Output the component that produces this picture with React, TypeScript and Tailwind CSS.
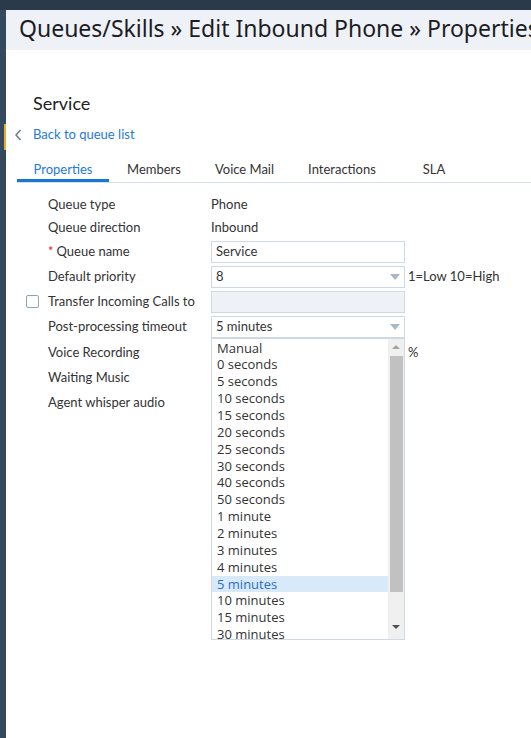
import React from 'react';

const tabs = [
  { label: 'Properties', w: 'w-[92px]', active: true },
  { label: 'Members', w: 'w-[90px]' },
  { label: 'Voice Mail', w: 'w-[91px]' },
  { label: 'Interactions', w: 'w-[104px]' },
  { label: 'SLA', w: 'w-[80px]' },
];

const options = [
  'Manual', '0 seconds', '5 seconds', '10 seconds', '15 seconds', '20 seconds', '25 seconds',
  '30 seconds', '40 seconds', '50 seconds', '1 minute', '2 minutes', '3 minutes', '4 minutes',
  '5 minutes', '10 minutes', '15 minutes', '30 minutes',
];

function Caret() {
  return (
    <svg width="10" height="6" viewBox="0 0 10 6" className="text-[#a9b8c9]">
      <path d="M0 0h10L5 6z" fill="currentColor" />
    </svg>
  );
}

function Label({ children }: { children: React.ReactNode }) {
  return <div className="w-[205px] pl-[42px] shrink-0">{children}</div>;
}

export default function App() {
  return (
    <div className="w-[531px] h-[738px] overflow-hidden bg-[#2b3a4a] pt-[10px] font-['Lato',sans-serif] text-[#333]">
      <div className="flex h-[728px]">
        <div className="w-[6px] bg-[#34495e] shrink-0 relative">
          <div className="absolute left-[4px] top-[114px] w-[2px] h-[26px] bg-[#f5a623]" />
        </div>
        <div className="flex-1 bg-white min-w-0">
          <div className="h-[40px] bg-[#eef2f7] pl-[13px] pb-[3px] flex items-center whitespace-nowrap overflow-hidden font-['Noto_Sans',sans-serif] text-[23px] text-[#1c1c24]">
            Queues/Skills » Edit Inbound Phone » Properties
          </div>
          <div className="pl-[27px] pt-[41px] text-[18px] leading-[24px] text-[#222]">Service</div>
          <div className="flex items-center h-[20px] mt-[10px] pl-[8px] text-[13px] text-[#1f7ad8]">
            <svg width="8" height="12" viewBox="0 0 8 12" className="mr-[11px]">
              <path d="M6.5 1L2 6l4.5 5" stroke="#6b7580" strokeWidth="1.4" fill="none" />
            </svg>
            Back to queue list
          </div>
          <div className="ml-[11px] mt-[12px] flex border-b border-[#d3deea] text-[13px]">
            {tabs.map((t) => (
              <div
                key={t.label}
                className={`${t.w} text-center h-[25px] flex items-center justify-center ${
                  t.active ? 'text-[#1f7ad8] border-b-[3px] border-[#1976d2] -mb-px pt-[3px]' : 'text-[#333] pt-[1px]'
                }`}
              >
                {t.label}
              </div>
            ))}
          </div>

          <div className="mt-[10px] text-[13px]">
            <div className="flex items-center h-[23px]">
              <Label>Queue type</Label>
              <div>Phone</div>
            </div>
            <div className="flex items-center h-[23px]">
              <Label>Queue direction</Label>
              <div>Inbound</div>
            </div>
            <div className="flex items-center h-[25px] pt-[1px]">
              <Label>
                <span className="text-[#e02424] mr-[3px]">*</span>Queue name
              </Label>
              <div className="w-[194px] h-[22px] border border-[#cfd9e4] px-[4px] flex items-center">Service</div>
            </div>
            <div className="flex items-center h-[25px]">
              <Label>Default priority</Label>
              <div className="flex items-center">
                <div className="w-[194px] h-[22px] border border-[#cfd9e4] px-[4px] flex items-center justify-between">
                  <span>8</span>
                  <Caret />
                </div>
                <span className="ml-[3px]">1=Low 10=High</span>
              </div>
            </div>
            <div className="flex items-center h-[25px] relative">
              <div className="absolute left-[20px] top-[6px] w-[13px] h-[13px] border border-[#8fa3b8] rounded-[2px] bg-white" />
              <Label>Transfer Incoming Calls to</Label>
              <div className="w-[194px] h-[22px] border border-[#cfd9e4] bg-[#eef2f7]" />
            </div>
            <div className="flex items-center h-[25px]">
              <Label>Post-processing timeout</Label>
              <div className="relative">
                <div className="w-[194px] h-[22px] border border-[#cfd9e4] px-[4px] flex items-center justify-between">
                  <span>5 minutes</span>
                  <Caret />
                </div>
                {/* open dropdown list */}
                <div className="absolute z-10 left-0 top-[22px] w-[194px] h-[302px] bg-white border border-[#cfd9e4] flex overflow-hidden font-['Open_Sans',sans-serif] text-[13px] text-[#333]">
                  <div className="flex-1 pt-[1px]">
                    {options.map((o) => (
                      <div
                        key={o}
                        className={`h-[16.86px] leading-[16.86px] pl-[5px] whitespace-nowrap ${
                          o === '5 minutes' ? 'bg-[#d8e9f9] text-[#2a6fc6]' : ''
                        }`}
                      >
                        {o}
                      </div>
                    ))}
                  </div>
                  <div className="w-[16px] bg-[#f0f0f0] flex flex-col items-center">
                    <div className="h-[17px] flex items-center justify-center">
                      <svg width="8" height="4" viewBox="0 0 8 4">
                        <path d="M0 4L4 0l4 4z" fill="#a3a3a3" />
                      </svg>
                    </div>
                    <div className="w-[13px] h-[236px] bg-[#c1c1c1]" />
                    <div className="flex-1" />
                    <div className="h-[17px] flex items-center justify-center mb-[3px]">
                      <svg width="8" height="4" viewBox="0 0 8 4">
                        <path d="M0 0h8L4 4z" fill="#505050" />
                      </svg>
                    </div>
                  </div>
                </div>
              </div>
            </div>
            <div className="flex items-center h-[26px] pt-[1px]">
              <Label>Voice Recording</Label>
              <div className="pl-[197px]">%</div>
            </div>
            <div className="flex items-center h-[25px]">
              <Label>Waiting Music</Label>
            </div>
            <div className="flex items-center h-[25px]">
              <Label>Agent whisper audio</Label>
            </div>
          </div>
        </div>
      </div>
    </div>
  );
}
